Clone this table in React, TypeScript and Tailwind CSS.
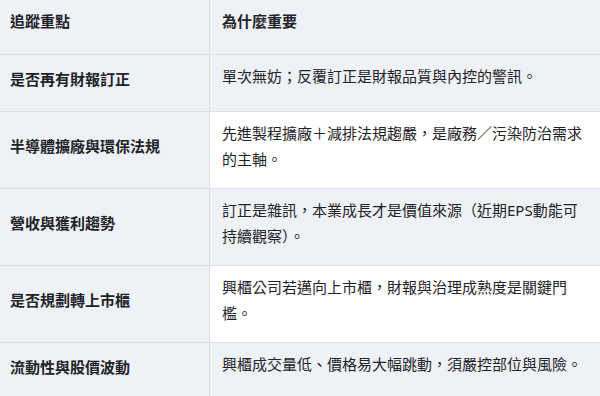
import React from "react";

const rows: [string, string][] = [
  ["是否再有財報訂正", "單次無妨；反覆訂正是財報品質與內控的警訊。"],
  ["半導體擴廠與環保法規", "先進製程擴廠＋減排法規趨嚴，是廠務／污染防治需求的主軸。"],
  ["營收與獲利趨勢", "訂正是雜訊，本業成長才是價值來源（近期EPS動能可持續觀察）。"],
  ["是否規劃轉上市櫃", "興櫃公司若邁向上市櫃，財報與治理成熟度是關鍵門檻。"],
  ["流動性與股價波動", "興櫃成交量低、價格易大幅跳動，須嚴控部位與風險。"],
];

export default function App() {
  return (
    <div
      className="w-[600px] h-[396px] overflow-hidden bg-[#eef1f5] text-[#1f2328] text-[15px] leading-[26px]"
      style={{ fontFamily: '"Noto Sans", "Noto Sans CJK TC", sans-serif' }}
    >
      <div className="flex border-b border-[#dde1e6] min-h-[55px]">
        <div className="w-[210px] shrink-0 border-r border-[#dde1e6] pl-[10px] pr-3 pt-2 pb-[16px] font-bold">
          追蹤重點
        </div>
        <div className="flex-1 pl-3 pr-3 pt-2 pb-[16px] font-bold">為什麼重要</div>
      </div>
      {rows.map(([a, b], i) => (
        <div key={i} className="flex border-b border-[#dde1e6] min-h-[57px]">
          <div className="w-[210px] shrink-0 border-r border-[#dde1e6] pl-[10px] pr-3 pt-2 pb-[16px] font-bold flex items-center">
            {a}
          </div>
          <div
            className={`flex-1 pl-3 pr-3 pt-2 pb-[16px] ${i % 2 === 1 ? "bg-white" : "bg-[#eef1f5]"}`}
          >
            {b}
          </div>
        </div>
      ))}
    </div>
  );
}
